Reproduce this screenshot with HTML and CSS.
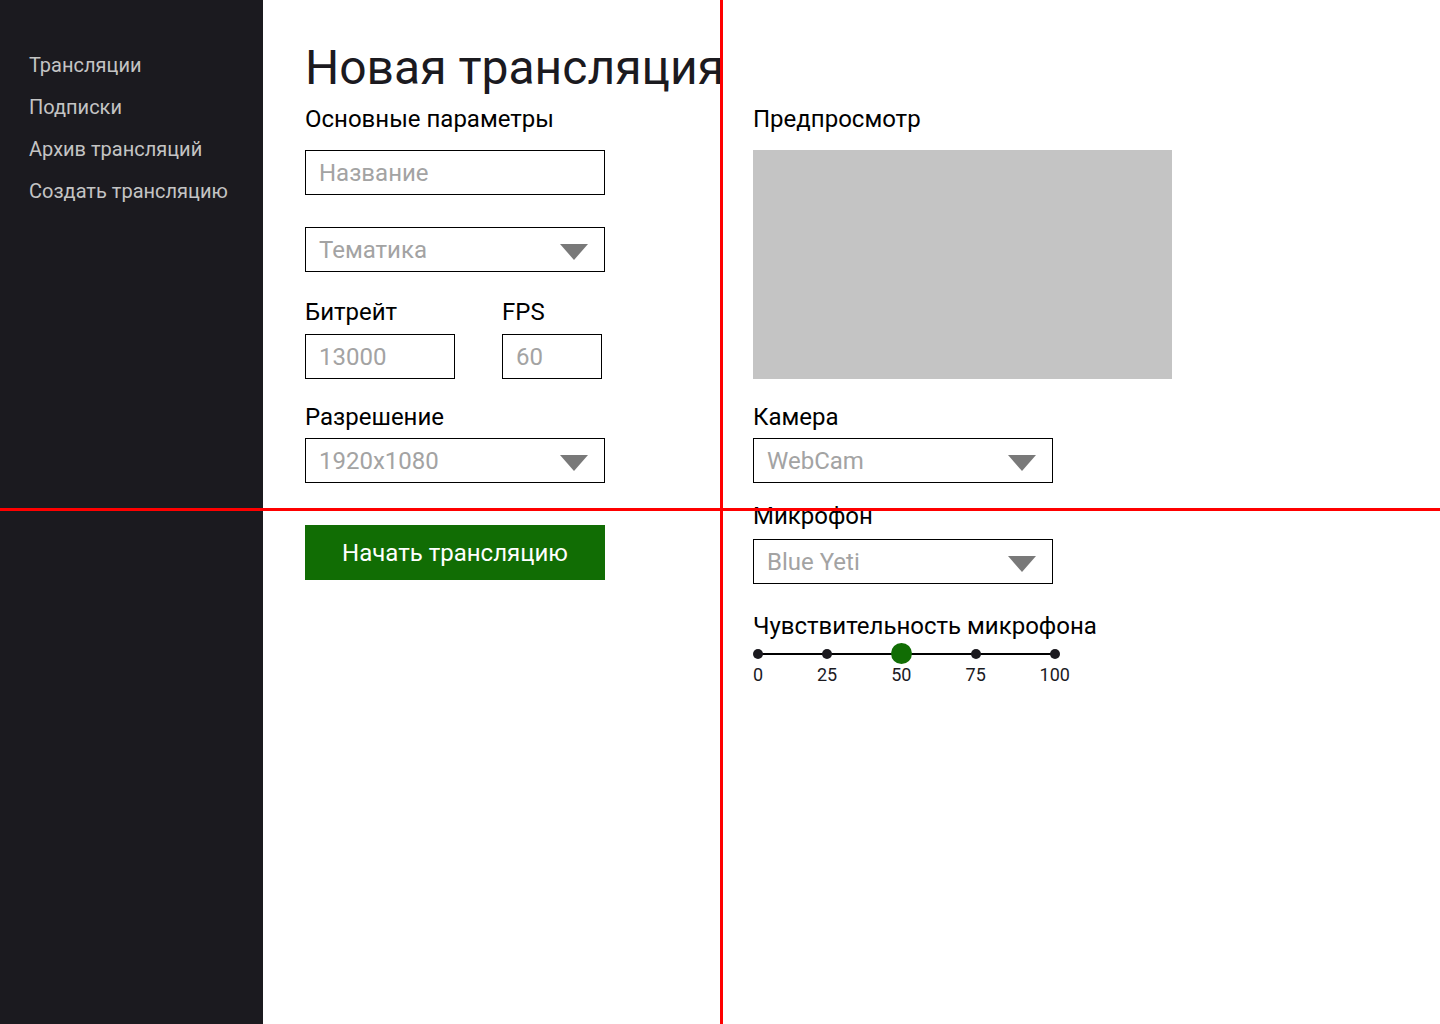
FILE: index.html
```html
<!DOCTYPE html>
<html lang="ru">
<head>
<meta charset="utf-8">
<title>Новая трансляция</title>
<link rel="stylesheet" href="styles.css">
</head>
<body>
<div class="app">
  <aside class="sidebar">
    <nav class="nav">
      <a class="nav-item" href="#">Трансляции</a>
      <a class="nav-item" href="#">Подписки</a>
      <a class="nav-item" href="#">Архив трансляций</a>
      <a class="nav-item" href="#">Создать трансляцию</a>
    </nav>
  </aside>
  <main class="main">
    <h1 class="title">Новая трансляция</h1>
    <div class="columns">
      <section class="col col-left">
        <h2 class="section-title">Основные параметры</h2>
        <div class="field field-name"><span class="placeholder">Название</span></div>
        <div class="field select field-topic"><span class="placeholder">Тематика</span><span class="arrow"></span></div>
        <div class="pair">
          <div class="pair-item">
            <div class="label">Битрейт</div>
            <div class="field field-bitrate"><span class="placeholder">13000</span></div>
          </div>
          <div class="pair-item">
            <div class="label">FPS</div>
            <div class="field field-fps"><span class="placeholder">60</span></div>
          </div>
        </div>
        <div class="label label-res">Разрешение</div>
        <div class="field select"><span class="placeholder">1920x1080</span><span class="arrow"></span></div>
        <button class="start-btn">Начать трансляцию</button>
      </section>
      <section class="col col-right">
        <h2 class="section-title">Предпросмотр</h2>
        <div class="preview"></div>
        <div class="label label-cam">Камера</div>
        <div class="field select"><span class="placeholder">WebCam</span><span class="arrow"></span></div>
        <div class="label label-mic">Микрофон</div>
        <div class="field select field-mic"><span class="placeholder">Blue Yeti</span><span class="arrow"></span></div>
        <div class="label label-sens">Чувствительность микрофона</div>
        <div class="slider">
          <div class="tick"><span class="mark"><span class="dot"></span></span><span class="tick-label">0</span></div>
          <div class="tick"><span class="mark"><span class="dot"></span></span><span class="tick-label">25</span></div>
          <div class="tick"><span class="mark"><span class="thumb"></span></span><span class="tick-label">50</span></div>
          <div class="tick"><span class="mark"><span class="dot"></span></span><span class="tick-label">75</span></div>
          <div class="tick"><span class="mark"><span class="dot"></span></span><span class="tick-label">100</span></div>
        </div>
      </section>
    </div>
  </main>
</div>
<div class="guide guide-v"></div>
<div class="guide guide-h"></div>
</body>
</html>
```

FILE: styles.css
```css
* { box-sizing: border-box; }
html, body { margin: 0; padding: 0; }
body {
  font-family: Roboto, "Noto Sans", Arial, sans-serif;
  background: #ffffff;
  color: #000;
  min-height: 1024px;
}
.app {
  display: flex;
  min-height: 1024px;
}
.sidebar {
  width: 263px;
  flex: 0 0 263px;
  background: #1b1a1f;
  min-height: 1024px;
}
.nav {
  display: flex;
  flex-direction: column;
  gap: 18px;
  padding: 53px 0 0 29px;
}
.nav-item {
  color: #c4c4c4;
  text-decoration: none;
  font-size: 20px;
  line-height: 24px;
}
.main {
  flex: 1;
  padding: 40px 0 0 42px;
}
.title {
  margin: 0;
  font-weight: 400;
  font-size: 48px;
  line-height: 56px;
  color: #1b1a1f;
}
.columns {
  display: flex;
  gap: 148px;
  margin-top: 9px;
}
.col {
  display: flex;
  flex-direction: column;
  align-items: flex-start;
}
.col-left { width: 300px; }
.col-right { width: 420px; }
.section-title {
  margin: 0;
  font-weight: 400;
  font-size: 24px;
  line-height: 28px;
}
.label {
  font-size: 24px;
  line-height: 28px;
}
.field {
  width: 300px;
  height: 45px;
  border: 1px solid #000;
  display: flex;
  align-items: center;
  padding: 0 16px 0 13px;
  background: #fff;
}
.placeholder {
  font-size: 24px;
  line-height: 28px;
  color: #a3a3a3;
  flex: 1;
  white-space: nowrap;
}
.arrow {
  width: 0;
  height: 0;
  border-left: 14px solid transparent;
  border-right: 14px solid transparent;
  border-top: 16px solid #797979;
  margin-top: 5px;
}
.field-name { margin-top: 17px; }
.field-topic { margin-top: 32px; }
.pair {
  display: flex;
  gap: 47px;
  margin-top: 26px;
}
.pair-item {
  display: flex;
  flex-direction: column;
}
.pair-item .field { margin-top: 8px; }
.field-bitrate { width: 150px; }
.field-fps { width: 100px; }
.label-res { margin-top: 24px; }
.label-res + .field { margin-top: 7px; }
.start-btn {
  margin-top: 42px;
  width: 300px;
  height: 55px;
  border: none;
  background: #116d04;
  color: #fff;
  font-family: inherit;
  font-size: 24px;
  line-height: 28px;
  padding: 0;
}
.preview {
  margin-top: 17px;
  width: 419px;
  height: 229px;
  background: #c4c4c4;
}
.label-cam { margin-top: 24px; }
.label-cam + .field { margin-top: 7px; }
.label-mic { margin-top: 19px; }
.field-mic { margin-top: 9px; }
.label-sens { margin-top: 28px; }
.slider {
  position: relative;
  width: 317px;
  display: flex;
  justify-content: space-between;
  margin-top: 3px;
}
.slider::before {
  content: "";
  position: absolute;
  left: 5px;
  right: 15px;
  top: 10px;
  height: 2px;
  background: #000;
}
.tick {
  display: flex;
  flex-direction: column;
  align-items: center;
  position: relative;
}
.mark {
  height: 21px;
  display: flex;
  align-items: center;
  justify-content: center;
}
.dot {
  width: 10px;
  height: 10px;
  border-radius: 50%;
  background: #1b1a1f;
}
.thumb {
  width: 21px;
  height: 21px;
  border-radius: 50%;
  background: #116d04;
}
.tick-label {
  font-size: 18px;
  line-height: 21px;
  color: #1b1a1f;
}
.guide {
  position: absolute;
  background: #ff0000;
}
.guide-v {
  left: 720px;
  top: 0;
  width: 3px;
  height: 1024px;
}
.guide-h {
  left: 0;
  top: 508px;
  width: 1440px;
  height: 3px;
}
```
